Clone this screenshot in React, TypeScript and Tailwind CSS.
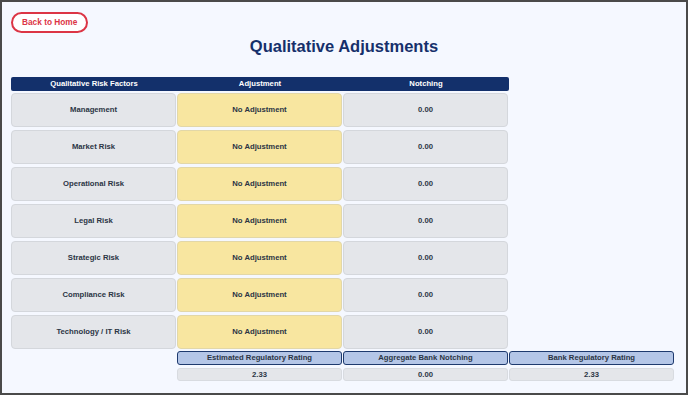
import React from 'react'

const factors = [
    'Management',
    'Market Risk',
    'Operational Risk',
    'Legal Risk',
    'Strategic Risk',
    'Compliance Risk',
    'Technology / IT Risk',
]

const summary = [
    { label: 'Estimated Regulatory Rating', value: '2.33' },
    { label: 'Aggregate Bank Notching', value: '0.00' },
    { label: 'Bank Regulatory Rating', value: '2.33' },
]

export default function App() {
    return (
        <div
            className="h-[395px] w-[688px] overflow-hidden border-2 border-[#4a4a4a] bg-[#f5f8ff] px-[9px] pt-[10px]"
            style={{ fontFamily: '"Liberation Sans", Arial, sans-serif' }}
        >
            <button className="flex h-[21px] items-center rounded-full border-2 border-[#dc3545] bg-white px-[9px] text-[8.3px] font-bold text-[#dc3545]">
                Back to Home
            </button>

            <h1 className="mt-[3px] -mx-[9px] text-center text-[16.5px] font-bold leading-[20px] text-[#16306b]">
                Qualitative Adjustments
            </h1>

            <div className="mt-[21px] w-[664px]">
                {/* table header */}
                <div className="grid w-[498px] grid-cols-3 rounded-[2px] bg-[#13306b] text-[7.7px] font-bold leading-[14px] text-white">
                    <div className="text-center">Qualitative Risk Factors</div>
                    <div className="text-center">Adjustment</div>
                    <div className="text-center">Notching</div>
                </div>

                <div className="mt-[2px] grid grid-cols-[165px_165px_165px_165px] gap-x-px gap-y-[3px] text-[7.7px] font-bold text-[#2b3545]">
                    {factors.map((f) => (
                        <React.Fragment key={f}>
                            <div className="flex h-[34px] items-center justify-center rounded-[4px] border border-[#d4d7dc] bg-[#e4e6ea]">
                                {f}
                            </div>
                            <div className="flex h-[34px] items-center justify-center rounded-[4px] border border-[#e2d7a8] bg-[#f8e6a0]">
                                No Adjustment
                            </div>
                            <div className="flex h-[34px] items-center justify-center rounded-[4px] border border-[#d4d7dc] bg-[#e4e6ea]">
                                0.00
                            </div>
                            <div />
                        </React.Fragment>
                    ))}
                </div>

                {/* summary */}
                <div className="mt-[2px] grid grid-cols-[165px_165px_165px_165px] gap-x-px gap-y-[3px] text-[7.7px] font-bold text-[#2b3545]">
                    <div />
                    {summary.map((s) => (
                        <div
                            key={s.label}
                            className="flex h-[14px] items-center justify-center rounded-[3px] border-[1.5px] border-[#1e3a6e] bg-[#b4c6e7]"
                        >
                            {s.label}
                        </div>
                    ))}
                    <div />
                    {summary.map((s) => (
                        <div
                            key={s.label + '-v'}
                            className="flex h-[13px] items-center justify-center rounded-[3px] border border-[#d8dbe0] bg-[#e4e6ea]"
                        >
                            {s.value}
                        </div>
                    ))}
                </div>
            </div>
        </div>
    )
}
